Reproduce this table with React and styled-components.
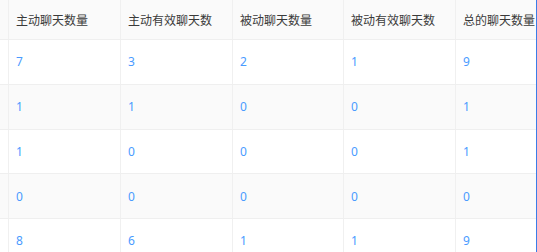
import React from "react";
import styled, { createGlobalStyle } from "styled-components";

const GlobalStyle = createGlobalStyle`
    html, body {
        margin: 0;
        padding: 0;
        background: #ffffff;
        overflow: hidden;
    }
    body {
        font-family: "Noto Sans", "Noto Sans CJK SC", sans-serif;
    }
`;

const columns = ["", "主动聊天数量", "主动有效聊天数", "被动聊天数量", "被动有效聊天数", "总的聊天数量"];

const rows = [
    ["", 7, 3, 2, 1, 9],
    ["", 1, 1, 0, 0, 1],
    ["", 1, 0, 0, 0, 1],
    ["", 0, 0, 0, 0, 0],
    ["", 8, 6, 1, 1, 9],
];

const Table = styled.div`
    width: 536px;
    height: 252px;
    border-right: 1px solid #3a7de8;
    display: flex;
    flex-direction: column;
    overflow: hidden;
`;

const Row = styled.div`
    display: grid;
    grid-template-columns: 9px 112px 112px 111px 112px 1fr;
    flex-shrink: 0;
    height: ${props => props.$head ? "40px" : "44.75px"};
    box-sizing: border-box;
    border-bottom: 1px solid #efefef;
    background: ${props => props.$gray ? "#fafafa" : "#ffffff"};
`;

const Cell = styled.div`
    display: flex;
    align-items: center;
    box-sizing: border-box;
    padding-left: 7px;
    white-space: nowrap;
    overflow: hidden;
    font-size: 12px;
    border-right: ${props => props.$last ? "none" : "1px solid #f0f0f0"};
    color: ${props => props.$head ? "#3a3a3a" : "#4a9bff"};
    &:first-child {
        padding-left: 0;
    }
`;

export default function App() {
    return (
        <>
            <GlobalStyle />
            <Table>
                <Row $head $gray>
                    {columns.map((c, i) => (
                        <Cell key={i} $head $last={i === columns.length - 1}>{c}</Cell>
                    ))}
                </Row>
                {rows.map((r, ri) => (
                    <Row key={ri} $gray={ri % 2 === 1}>
                        {r.map((v, i) => (
                            <Cell key={i} $last={i === r.length - 1}>{v}</Cell>
                        ))}
                    </Row>
                ))}
            </Table>
        </>
    );
}
